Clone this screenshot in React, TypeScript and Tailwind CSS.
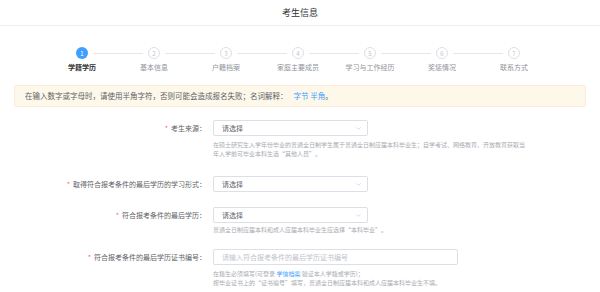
import { ChevronDown } from "lucide-react";

const steps = ["学籍学历", "基本信息", "户籍档案", "家庭主要成员", "学习与工作经历", "奖惩情况", "联系方式"];

const font = { fontFamily: '"Noto Sans CJK SC", "Noto Sans", sans-serif' };

function Label({ text }: { text: string }) {
  return (
    <div className="w-[207px] shrink-0 pr-[1px] text-right text-[7px] leading-[16px] text-[#606266]">
      <span className="text-[#f56c6c] mr-[3px]">*</span>
      {text}：
    </div>
  );
}

function Select() {
  return (
    <div className="ml-[6px] flex h-[16px] w-[155px] items-center justify-between rounded-[2px] border border-[#dcdfe6] bg-white pl-[8px] pr-[5px] text-[7px] text-[#606266]">
      <span>请选择</span>
      <ChevronDown size={7} strokeWidth={1.5} className="text-[#a8abb2]" />
    </div>
  );
}

function Hint({ children, className = "" }: { children: React.ReactNode; className?: string }) {
  return (
    <div className={`ml-[213px] text-[6px] leading-[9px] text-[#a8abb2] ${className}`}>{children}</div>
  );
}

export default function App() {
  return (
    <div className="h-[292px] w-[600px] overflow-hidden bg-white" style={font}>
      <div className="flex h-[26px] items-center justify-center border-b border-[#eeeeee] text-[9px] text-[#303133]">
        考生信息
      </div>

      {/* steps */}
      <div className="mt-[21px] pl-[46px]">
        <div className="flex items-center pl-[30px]">
          {steps.map((s, i) => (
            <div key={s} className="flex items-center">
              <div
                className={
                  i === 0
                    ? "flex h-[12px] w-[12px] items-center justify-center rounded-full bg-[#409eff] text-[6px] text-white"
                    : "flex h-[12px] w-[12px] items-center justify-center rounded-full border border-[#dcdfe6] text-[6px] text-[#c0c4cc]"
                }
              >
                {i + 1}
              </div>
              {i < steps.length - 1 && <div className="mx-[5px] h-px w-[50px] bg-[#e4e7ed]" />}
            </div>
          ))}
        </div>
        <div className="mt-[3px] flex">
          {steps.map((s, i) => (
            <div
              key={s}
              className={`w-[72px] text-center text-[7px] leading-[10px] ${
                i === 0 ? "font-bold text-[#303133]" : "text-[#909399]"
              }`}
            >
              {s}
            </div>
          ))}
        </div>
      </div>

      {/* notice */}
      <div className="mx-[14px] mt-[13px] flex h-[22px] items-center rounded-[2px] border border-[#faecd8] bg-[#fdf8ea] pl-[10px] text-[7.5px] text-[#606266]">
        在输入数字或字母时，请使用半角字符，否则可能会造成报名失败；名词解释：
        <span className="ml-[6px] text-[#409eff]">字节 半角</span>。
      </div>

      {/* form */}
      <div className="mt-[13px]">
        <div className="flex">
          <Label text="考生来源" />
          <Select />
        </div>
        <Hint className="mt-[4px] w-[312px]">
          在硕士研究生入学年份毕业的普通全日制学生属于普通全日制应届本科毕业生；自学考试、网络教育、开放教育获取当年入学前可毕业本科生选“其他人员”。
        </Hint>

        <div className="mt-[18px] flex">
          <Label text="取得符合报考条件的最后学历的学习形式" />
          <Select />
        </div>

        <div className="mt-[15px] flex">
          <Label text="符合报考条件的最后学历" />
          <Select />
        </div>
        <Hint className="mt-[2px]">普通全日制应届本科和成人应届本科毕业生应选择“本科毕业”。</Hint>

        <div className="mt-[15px] flex">
          <Label text="符合报考条件的最后学历证书编号" />
          <div className="ml-[6px] flex h-[16px] w-[245px] items-center rounded-[2px] border border-[#dcdfe6] pl-[8px] text-[7px] text-[#c0c4cc]">
            请输入符合报考条件的最后学历证书编号
          </div>
        </div>
        <Hint className="mt-[4px]">
          在籍生必须填写(可登录 <span className="text-[#409eff]">学信档案</span> 验证本人学籍或学历)；
        </Hint>
        <Hint>按毕业证书上的“证书编号”填写，普通全日制应届本科和成人应届本科毕业生不填。</Hint>
      </div>
    </div>
  );
}
